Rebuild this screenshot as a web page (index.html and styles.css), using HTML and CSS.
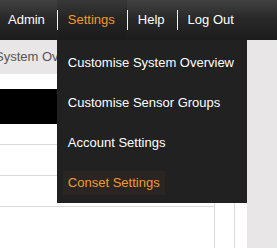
FILE: index.html
```html
<!DOCTYPE html>
<html lang="en">
<head>
    <meta charset="UTF-8">
    <title>Settings</title>
    <link rel="stylesheet" href="styles.css">
</head>
<body>
    <header class="topbar">
        <ul class="nav">
            <li class="nav-item">Admin</li>
            <li class="nav-item active">Settings
                <ul class="dropdown">
                    <li><span>Customise System Overview</span></li>
                    <li><span>Customise Sensor Groups</span></li>
                    <li><span>Account Settings</span></li>
                    <li class="hover"><span>Conset Settings</span></li>
                </ul>
            </li>
            <li class="nav-item">Help</li>
            <li class="nav-item">Log Out</li>
        </ul>
    </header>

    <div class="page">
        <main class="panel">
            <div class="crumb">System Overview</div>
            <div class="content">
                <div class="main-col">
                    <div class="table-head"></div>
                    <div class="row first"></div>
                    <div class="row"></div>
                    <div class="row"></div>
                </div>
                <div class="side-col"></div>
            </div>
        </main>
    </div>
</body>
</html>
```

FILE: styles.css
```css
body {
    margin: 0;
    font-family: 'Liberation Sans', Arial, sans-serif;
    font-size: 13px;
    background: #e8e6e6;
    height: 248px;
    overflow: hidden;
}
.topbar {
    height: 40px;
    background: linear-gradient(#424242 0%, #292929 45%, #1c1c1c 100%);
}
.nav {
    display: flex;
    list-style: none;
    margin: 0 0 0 -3px;
    padding: 0;
    height: 40px;
}
.nav-item {
    position: relative;
    padding: 0 12px 0 11px;
    line-height: 40px;
    color: #fff;
}
.nav-item + .nav-item::before {
    content: '';
    position: absolute;
    left: 0;
    top: 10px;
    width: 1px;
    height: 20px;
    background: #f2f2f2;
}
.nav-item.active {
    color: #f39a2c;
    background: linear-gradient(#383838 0%, #252525 45%, #1b1b1b 100%);
}
.dropdown {
    position: absolute;
    top: 40px;
    left: 0;
    width: 178px;
    list-style: none;
    margin: 0;
    padding: 11px 6px 8px;
    background: #212121;
    line-height: 24px;
    z-index: 2;
}
.dropdown li {
    margin-bottom: 16px;
    color: #fff;
    white-space: nowrap;
}
.dropdown li:last-child {
    margin-bottom: 0;
}
.dropdown span {
    display: inline-block;
    padding: 0 5px;
}
.dropdown .hover span {
    background: #2a2522;
    color: #f39a2c;
}
.page {
    display: flex;
}
.panel {
    width: 247px;
}
.crumb {
    height: 34px;
    line-height: 34px;
    margin-left: -5px;
    color: #555;
    white-space: nowrap;
    overflow: hidden;
}
.content {
    display: flex;
    background: #fff;
    padding-top: 15px;
    height: 159px;
}
.main-col {
    width: 214px;
    border-right: 1px solid #dadada;
}
.side-col {
    width: 19px;
    border-right: 1px solid #dadada;
}
.table-head {
    height: 35px;
    background: #000;
}
.row {
    height: 30px;
    border-bottom: 1px solid #dadada;
}
.row.first {
    height: 20px;
}
```
